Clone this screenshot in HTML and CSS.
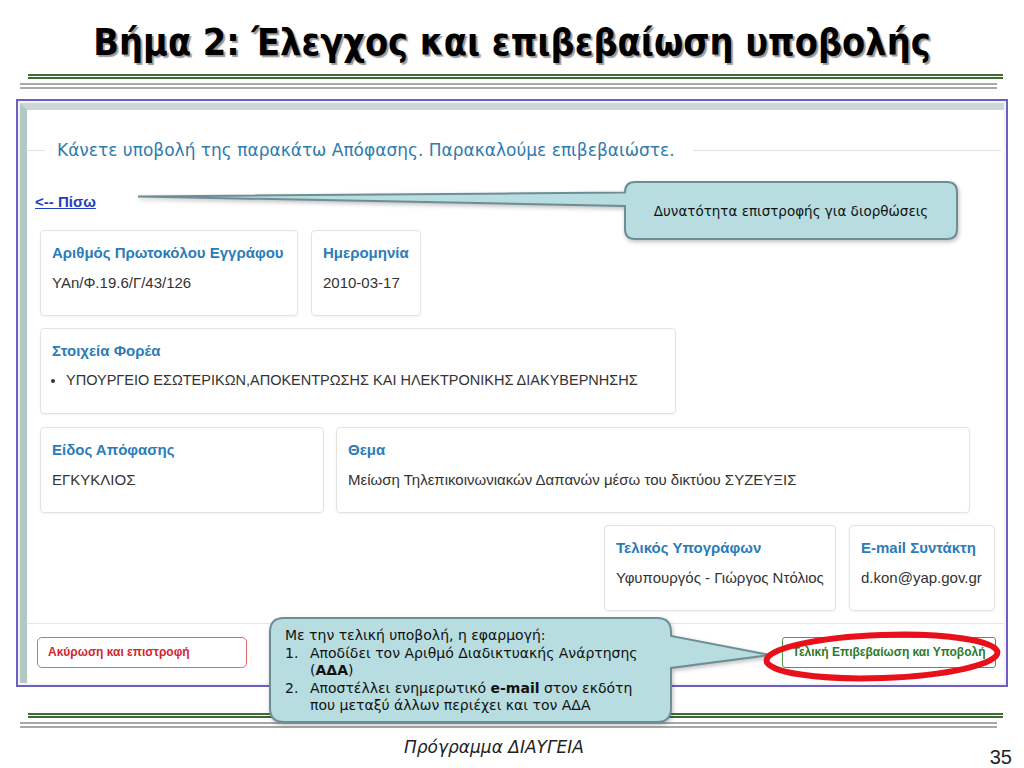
FILE: index.html
```html
<!DOCTYPE html>
<html lang="el">
<head>
	<meta charset="UTF-8">
	<title>Βήμα 2</title>
	<link rel="stylesheet" href="styles.css">
</head>
<body>
<div class="slide">
	<h1 class="title">Βήμα 2: Έλεγχος και επιβεβαίωση υποβολής</h1>
	<div class="rule">
		<div class="rule-green"></div>
		<div class="rule-grey"></div>
	</div>

	<div class="shot">
		<div class="shot-in">
			<div class="legend">
				<span class="legend-line short"></span>
				<span class="legend-text">Κάνετε υποβολή της παρακάτω Απόφασης. Παρακαλούμε επιβεβαιώστε.</span>
				<span class="legend-line"></span>
			</div>
			<a class="back" href="#">&lt;-- Πίσω</a>

			<div class="row row-1">
				<div class="card w-protocol">
					<div class="card-head">Αριθμός Πρωτοκόλου Εγγράφου</div>
					<div class="card-val">YAn/Φ.19.6/Γ/43/126</div>
				</div>
				<div class="card w-date">
					<div class="card-head">Ημερομηνία</div>
					<div class="card-val">2010-03-17</div>
				</div>
			</div>
			<div class="row">
				<div class="card w-org">
					<div class="card-head">Στοιχεία Φορέα</div>
					<ul class="card-list">
						<li>ΥΠΟΥΡΓΕΙΟ ΕΣΩΤΕΡΙΚΩΝ,ΑΠΟΚΕΝΤΡΩΣΗΣ ΚΑΙ ΗΛΕΚΤΡΟΝΙΚΗΣ ΔΙΑΚΥΒΕΡΝΗΣΗΣ</li>
					</ul>
				</div>
			</div>
			<div class="row row-3">
				<div class="card w-type">
					<div class="card-head">Είδος Απόφασης</div>
					<div class="card-val">ΕΓΚΥΚΛΙΟΣ</div>
				</div>
				<div class="card w-subject">
					<div class="card-head">Θεμα</div>
					<div class="card-val">Μείωση Τηλεπικοινωνιακών Δαπανών μέσω του δικτύου ΣΥΖΕΥΞΙΣ</div>
				</div>
			</div>
			<div class="row row-4">
				<div class="card w-signer">
					<div class="card-head">Τελικός Υπογράφων</div>
					<div class="card-val">Υφυπουργός - Γιώργος Ντόλιος</div>
				</div>
				<div class="card w-mail">
					<div class="card-head">E-mail Συντάκτη</div>
					<div class="card-val">d.kon@yap.gov.gr</div>
				</div>
			</div>

			<div class="actions">
				<span class="btn btn-cancel">Ακύρωση και επιστροφή</span>
				<span class="btn btn-submit">Τελική Επιβεβαίωση και Υποβολή</span>
			</div>
		</div>
	</div>

	<div class="rule rule-bottom">
		<div class="rule-green"></div>
		<div class="rule-grey"></div>
	</div>
	<div class="footer">
		<span class="footer-text">Πρόγραμμα ΔΙΑΥΓΕΙΑ</span>
		<span class="page-no">35</span>
	</div>

	<!-- callouts and the red mark sit over the screenshot -->
	<svg class="overlay" width="1024" height="768" viewBox="0 0 1024 768">
		<path class="callout" d="M635,182 H947 Q957,182 957,192 V229 Q957,239 947,239 H635 Q625,239 625,229 V206 L138,196.5 L625,192.5 Q625,182 635,182 Z"/>
		<path class="callout" d="M284,618 H657 Q671,618 671,632 V636 L770,655 L671,668 V708 Q671,722 657,722 H284 Q270,722 270,708 V632 Q270,618 284,618 Z"/>
		<ellipse class="mark" cx="882" cy="656.5" rx="115.5" ry="21.5" transform="rotate(-2 882 656.5)"/>
	</svg>
	<div class="note note-back">Δυνατότητα επιστροφής για διορθώσεις</div>
	<div class="note note-submit">
		Με την τελική υποβολή, η εφαρμογή:
		<ol>
			<li><span>Αποδίδει τον Αριθμό Διαδικτυακής Ανάρτησης<br>(<b>ΑΔΑ</b>)</span></li>
			<li><span>Αποστέλλει ενημερωτικό <b>e-mail</b> στον εκδότη<br>που μεταξύ άλλων περιέχει και τον ΑΔΑ</span></li>
		</ol>
	</div>
</div>
</body>
</html>
```

FILE: styles.css
```css
body{
	margin: 0;
	background: #fff;
}
.slide{
	position: relative;
	width: 1024px;
	height: 768px;
	overflow: hidden;
	font-family: "Liberation Sans", Arial, sans-serif;
}
.title{
	margin: 0;
	padding-top: 20px;
	height: 50px;
	line-height: 44px;
	text-align: center;
	font-family: "DejaVu Sans Condensed", "Liberation Sans", sans-serif;
	font-stretch: condensed;
	font-size: 37.5px;
	font-weight: bold;
	color: #000;
	text-shadow: 2px 2px 1px #9a9a9a;
}

/* double lines under the title and above the footer */
.rule{
	padding-top: 4px;
}
.rule-green{
	height: 1px;
	margin: 0 21px 0 28px;
	border-top: 2px solid #3e6a34;
	border-bottom: 2px solid #3e6a34;
}
.rule-grey{
	height: 2px;
	margin: 4px 27px 0 20px;
	border-top: 2px solid #a8a8a8;
	border-bottom: 2px solid #a8a8a8;
}

/* the web page screenshot */
.shot{
	box-sizing: border-box;
	width: 992px;
	height: 588px;
	margin: 10px 0 0 16px;
	padding: 2px;
	border: 2px solid #6b5fc2;
	background: #f4f3fb;
}
.shot-in{
	box-sizing: border-box;
	height: 100%;
	border-left: 7px solid #b3c7c3;
	border-top: 7px solid #c8d8d5;
	background: #fff;
	overflow: hidden;
}
.legend{
	display: flex;
	align-items: center;
	height: 24px;
	margin-top: 28px;
}
.legend-line{
	flex: 1;
	border-top: 1px solid #e2e2e2;
	margin-right: 3px;
}
.legend-line.short{
	flex: none;
	width: 18px;
	margin: 0;
}
.legend-text{
	padding: 0 18px 0 12px;
	font-family: "DejaVu Sans", sans-serif;
	font-size: 17px;
	color: #2e7bae;
	white-space: nowrap;
}
.back{
	display: inline-block;
	margin: 31px 0 0 8px;
	font-size: 15px;
	line-height: 17px;
	font-weight: bold;
	color: #1e3fbd;
	text-decoration: underline;
}

.row{
	display: flex;
	gap: 13px;
	margin: 12px 0 0 13px;
}
.row-1{
	margin-top: 19px;
}
.row-3{
	gap: 12px;
	margin-top: 13px;
}
.row-4{
	justify-content: flex-end;
	margin: 12px 9px 0 0;
}
.card{
	box-sizing: border-box;
	height: 86px;
	padding: 13px 11px 0;
	border: 1px solid #e3e3e3;
	border-radius: 4px;
	box-shadow: 0 1px 2px rgba(0,0,0,.05);
}
.card-head{
	font-size: 15px;
	line-height: 18px;
	font-weight: bold;
	color: #2b7cb8;
	white-space: nowrap;
}
.card-val{
	margin-top: 12px;
	font-size: 15px;
	line-height: 18px;
	color: #333;
	white-space: nowrap;
}
.card-list{
	margin: 11px 0 0;
	padding-left: 14px;
	font-size: 14.5px;
	line-height: 18px;
	color: #333;
	white-space: nowrap;
}
.w-protocol{ width: 258px; }
.w-date{ width: 110px; }
.w-org{ width: 636px; }
.w-type{ width: 284px; }
.w-subject{ width: 634px; }
.w-signer{ width: 232px; }
.w-mail{ width: 146px; }

.actions{
	display: flex;
	justify-content: space-between;
	margin-top: 12px;
	padding: 13px 8px 0 10px;
	border-top: 1px solid #e6e6e6;
}
.btn{
	box-sizing: border-box;
	height: 31px;
	line-height: 29px;
	font-size: 12px;
	font-weight: bold;
	white-space: nowrap;
}
.btn-cancel{
	width: 210px;
	padding-left: 10px;
	border: 1px solid #e36a6a;
	border-radius: 5px;
	color: #d42630;
}
.btn-submit{
	width: 214px;
	text-align: center;
	border: 1px solid #47a047;
	border-radius: 3px;
	color: #2b7a2d;
}

.rule-bottom{
	margin-top: 22px;
}
.footer{
	display: flex;
	height: 40px;
}
.footer-text{
	margin: 9px 0 0 404px;
	font-family: "DejaVu Sans", sans-serif;
	font-style: italic;
	font-size: 17px;
	line-height: 20px;
	color: #222;
}
.page-no{
	margin: 19px 12px 0 auto;
	font-size: 20px;
	line-height: 20px;
	color: #222;
}

.overlay{
	position: absolute;
	left: 0;
	top: 0;
	pointer-events: none;
}
.callout{
	fill: #b7dde0;
	stroke: #6e8e96;
	stroke-width: 2;
	filter: drop-shadow(1px 2px 2px rgba(0,0,0,.25));
}
.mark{
	fill: none;
	stroke: #e8111b;
	stroke-width: 6;
}
.note{
	position: absolute;
	box-sizing: border-box;
	font-family: "DejaVu Sans", Verdana, sans-serif;
	color: #111;
}
.note-back{
	left: 625px;
	top: 182px;
	width: 332px;
	height: 57px;
	display: flex;
	align-items: center;
	justify-content: center;
	font-size: 13.5px;
}
.note-submit{
	left: 270px;
	top: 618px;
	width: 401px;
	height: 104px;
	padding: 9px 6px 0 15px;
	font-size: 14px;
	line-height: 17.5px;
	white-space: nowrap;
}
.note-submit ol{
	margin: 0;
	padding: 0;
	list-style: none;
	counter-reset: item;
}
.note-submit li{
	display: flex;
	counter-increment: item;
}
.note-submit li::before{
	content: counter(item) ".";
	flex: none;
	width: 25px;
}
```
